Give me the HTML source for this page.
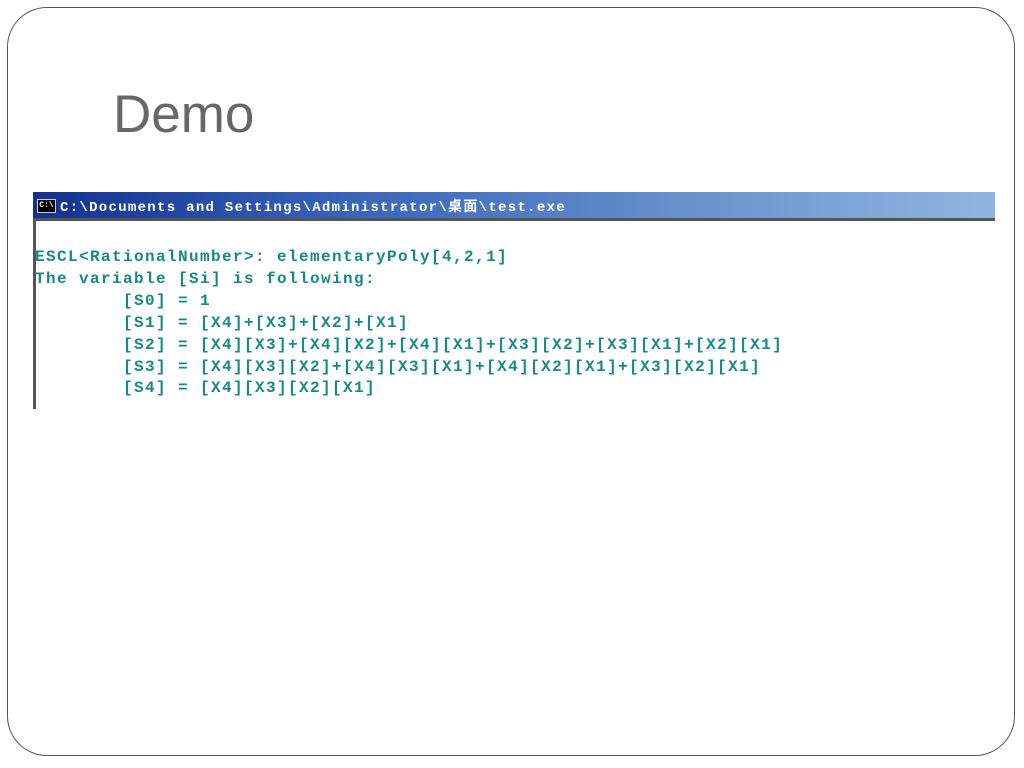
<!DOCTYPE html>
<html><head><meta charset="utf-8"><style>
body{margin:0;width:1024px;height:768px;background:#fff;position:relative;overflow:hidden}
.frame{position:absolute;left:7px;top:7px;width:1008px;height:749px;border:1.5px solid #555;border-radius:40px;box-sizing:border-box}
.title{position:absolute;left:113px;top:84px;font:53px "Liberation Sans",sans-serif;color:#6a6566}
.bar{position:absolute;left:33px;top:192px;width:962px;height:26px;background:linear-gradient(to right,#12308f,#3560b8 30%,#6a95cc 70%,#8fb6e2);border-bottom:3px solid #555}
.icon{position:absolute;left:4px;top:7px;width:17px;height:12px;background:#000;border:1px solid #ccc;color:#fff;font:bold 8px "Liberation Mono",monospace;line-height:12px;text-align:center}
.bt{position:absolute;left:27px;top:4px;color:#fff;font:bold 14px "Liberation Mono","Noto Sans CJK SC",monospace;letter-spacing:1.3px;white-space:pre}
.lb{position:absolute;left:33px;top:221px;width:3px;height:188px;background:#555}
pre{position:absolute;left:35px;top:247px;margin:0;font:bold 16px "Liberation Mono",monospace;letter-spacing:1.4px;line-height:21.9px;color:#138a8a}
</style></head><body>
<div class="frame"></div>
<div class="title">Demo</div>
<div class="bar"><div class="icon">C:\</div><div class="bt">C:\Documents and Settings\Administrator\桌面\test.exe</div></div>
<div class="lb"></div>
<pre>ESCL&lt;RationalNumber&gt;: elementaryPoly[4,2,1]
The variable [Si] is following:
        [S0] = 1
        [S1] = [X4]+[X3]+[X2]+[X1]
        [S2] = [X4][X3]+[X4][X2]+[X4][X1]+[X3][X2]+[X3][X1]+[X2][X1]
        [S3] = [X4][X3][X2]+[X4][X3][X1]+[X4][X2][X1]+[X3][X2][X1]
        [S4] = [X4][X3][X2][X1]</pre>
</body></html>
